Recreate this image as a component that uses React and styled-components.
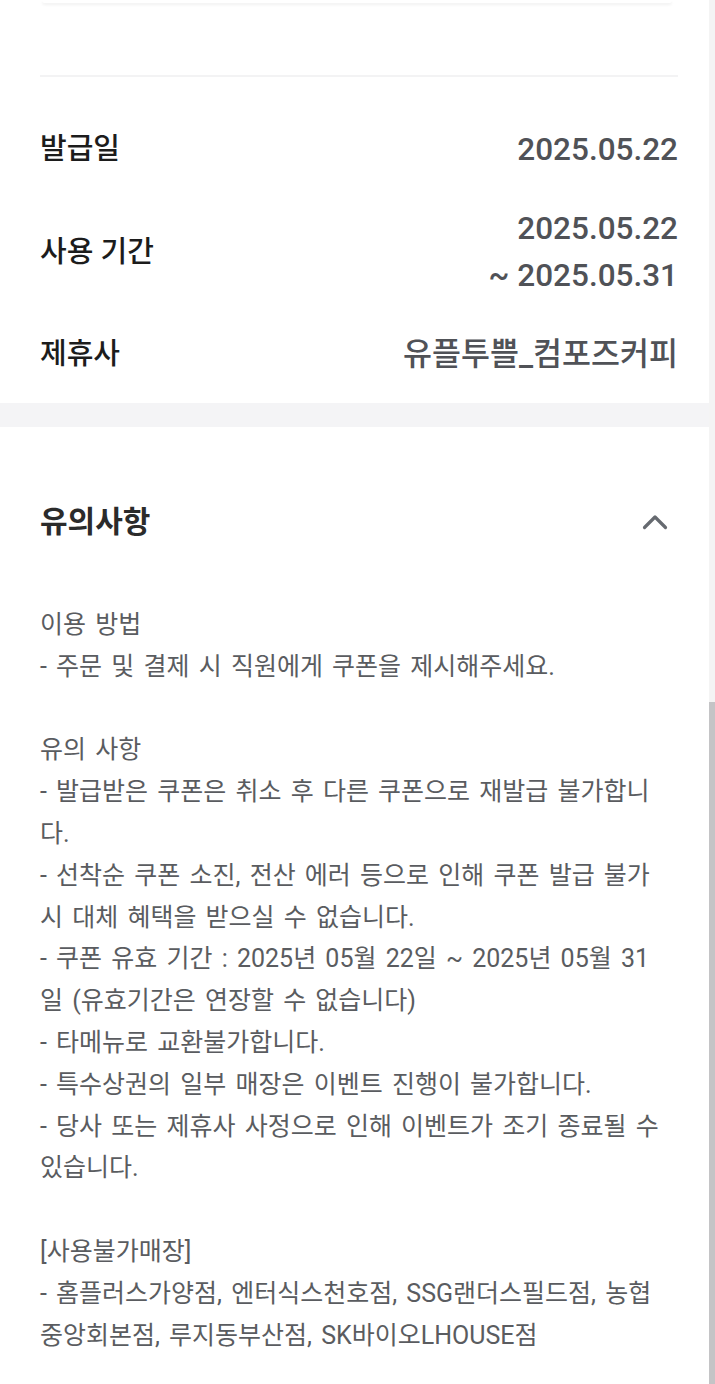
import React from "react";
import styled, { createGlobalStyle } from "styled-components";

const GlobalStyle = createGlobalStyle`
    html, body {
        margin: 0;
        padding: 0;
        background: #ffffff;
        overflow: hidden;
    }
    body {
        font-family: Roboto, "Noto Sans CJK KR", "Noto Sans", sans-serif;
        -webkit-font-smoothing: antialiased;
    }
`;

const info = [
    { label: "발급일", values: ["2025.05.22"] },
    { label: "사용 기간", values: ["2025.05.22", "~ 2025.05.31"] },
    { label: "제휴사", values: ["유플투쁠_컴포즈커피"] },
];

const notice = [
    "이용 방법",
    "- 주문 및 결제 시 직원에게 쿠폰을 제시해주세요.",
    "",
    "유의 사항",
    "- 발급받은 쿠폰은 취소 후 다른 쿠폰으로 재발급 불가합니",
    "다.",
    "- 선착순 쿠폰 소진, 전산 에러 등으로 인해 쿠폰 발급 불가",
    "시 대체 혜택을 받으실 수 없습니다.",
    "- 쿠폰 유효 기간 : 2025년 05월 22일 ~ 2025년 05월 31",
    "일 (유효기간은 연장할 수 없습니다)",
    "- 타메뉴로 교환불가합니다.",
    "- 특수상권의 일부 매장은 이벤트 진행이 불가합니다.",
    "- 당사 또는 제휴사 사정으로 인해 이벤트가 조기 종료될 수",
    "있습니다.",
    "",
    "[사용불가매장]",
    "- 홈플러스가양점, 엔터식스천호점, SSG랜더스필드점, 농협",
    "중앙회본점, 루지동부산점, SK바이오LHOUSE점",
];

const ChevronUp = () => (
    <svg width="26" height="16" viewBox="0 0 26 16" fill="none">
        <path
            d="M2.5 13.5 L13 3 L23.5 13.5"
            stroke="#666a70"
            strokeWidth="3.2"
            strokeLinecap="round"
            strokeLinejoin="round"
        />
    </svg>
);

const App = () => {
    return (
        <Page>
            <GlobalStyle />
            <CardEdge />
            <Divider />
            <InfoList>
                {info.map((row) => (
                    <InfoRow key={row.label}>
                        <Label>{row.label}</Label>
                        <Values>
                            {row.values.map((v) => (
                                <Value key={v}>{v}</Value>
                            ))}
                        </Values>
                    </InfoRow>
                ))}
            </InfoList>
            <Band />
            <Notice>
                <NoticeHeader>
                    <NoticeTitle>유의사항</NoticeTitle>
                    <ToggleButton aria-label="접기">
                        <ChevronUp />
                    </ToggleButton>
                </NoticeHeader>
                <NoticeBody>
                    {notice.map((line, i) => (
                        <Line key={i}>{line || "\u00a0"}</Line>
                    ))}
                </NoticeBody>
            </Notice>
            <ScrollTrack>
                <ScrollThumb />
            </ScrollTrack>
        </Page>
    );
};

const Page = styled.div`
    width: 715px;
    min-height: 1384px;
    background: #ffffff;
    display: flex;
    flex-direction: column;
`;
const CardEdge = styled.div`
    height: 3px;
    margin: 0 43px 0 42px;
    background: #ffffff;
    border-radius: 0 0 14px 14px;
    box-shadow: 0 2px 3px rgba(0, 0, 0, 0.06);
`;
const Divider = styled.div`
    height: 2px;
    margin: 72px 37px 0 40px;
    background: #f3f3f4;
`;
const InfoList = styled.div`
    display: flex;
    flex-direction: column;
    gap: 32px;
    padding: 49px 37px 25px 40px;
`;
const InfoRow = styled.div`
    display: flex;
    align-items: center;
    justify-content: space-between;
`;
const Label = styled.div`
    font-size: 29px;
    font-weight: 500;
    color: #1c1c1c;
    line-height: 47px;
`;
const Values = styled.div`
    display: flex;
    flex-direction: column;
    align-items: flex-end;
`;
const Value = styled.div`
    font-size: 31.5px;
    font-weight: 500;
    color: #505257;
    line-height: 47px;
    white-space: nowrap;
`;
const Band = styled.div`
    height: 24px;
    background: #f4f4f6;
`;
const Notice = styled.section`
    display: flex;
    flex-direction: column;
    padding: 75px 37px 0 40px;
`;
const NoticeHeader = styled.div`
    display: flex;
    align-items: center;
    justify-content: space-between;
    height: 40px;
`;
const NoticeTitle = styled.h2`
    margin: 0;
    font-size: 30px;
    font-weight: 700;
    color: #2b2b2b;
    line-height: 40px;
`;
const ToggleButton = styled.button`
    display: flex;
    align-items: center;
    justify-content: center;
    padding: 0;
    margin-right: 10px;
    border: none;
    background: none;
    cursor: pointer;
`;
const NoticeBody = styled.div`
    margin-top: 62px;
    display: flex;
    flex-direction: column;
`;
const Line = styled.div`
    font-size: 25px;
    font-weight: 400;
    word-spacing: 3px;
    color: #5a5c60;
    line-height: 41.8px;
    white-space: nowrap;
`;
const ScrollTrack = styled.div`
    position: fixed;
    top: 0;
    right: 0;
    width: 6px;
    height: 100%;
    background: #f4f4f4;
    display: flex;
    flex-direction: column;
`;
const ScrollThumb = styled.div`
    margin-top: 702px;
    flex: 1;
    background: #c4c4c6;
`;

export default App;
